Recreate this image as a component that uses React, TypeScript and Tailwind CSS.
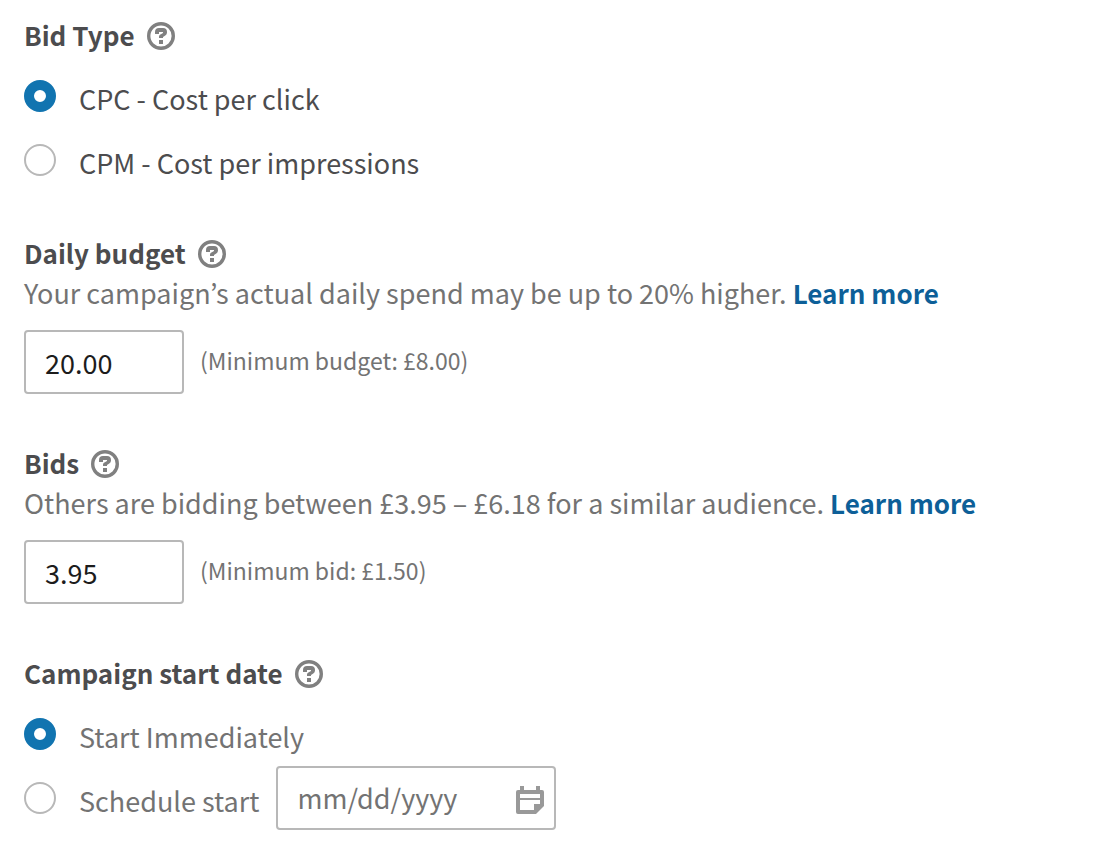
import { useState } from "react";
import type { ReactNode } from "react";

function HelpIcon() {
  return (
    <svg viewBox="0 0 28 28" className="h-7 w-7" fill="currentColor" aria-hidden="true">
      <circle cx="14" cy="14" r="12.3" fill="none" stroke="currentColor" strokeWidth="3.4" />
      <path d="M8 12v-2a4 4 0 0 1 4-4h4a4 4 0 0 1 4 4v.5a3.500 3.500 0 0 1-1.700 3L16 14.900V16h-4v-1.500a2 2 0 0 1 1-1.700l2.600-1.500a.8.8 0 0 0 .4-.7V10h-4v2z" />
      <path d="M12 18h4v4h-4z" />
    </svg>
  );
}

function CalendarIcon() {
  return (
    <svg viewBox="0 0 28 28" className="h-7 w-7 shrink-0" fill="currentColor" aria-hidden="true">
      <path
        fillRule="evenodd"
        d="M4 0h4v4h12V0h4v4h2a2 2 0 0 1 2 2v14l-8 8H2a2 2 0 0 1-2-2V6a2 2 0 0 1 2-2h2zM4 8v4h20V8zM4 14v10h14v-6h6v-4z"
      />
    </svg>
  );
}

function FieldTitle({ children }: { children: ReactNode }) {
  return (
    <div className="flex h-10 items-center gap-3">
      <h2 className="pb-1 font-bold text-[#4c4c4e]">{children}</h2>
      <button type="button" aria-label="Help" className="text-[#808080]">
        <HelpIcon />
      </button>
    </div>
  );
}

interface RadioOptionProps {
  name: string;
  label: string;
  checked: boolean;
  onSelect: () => void;
  muted?: boolean;
}

function RadioOption({ name, label, checked, onSelect, muted = false }: RadioOptionProps) {
  return (
    <label className={`flex h-16 items-start gap-[23px] text-[27px] ${muted ? "text-[#737373]" : "text-[#4c4c4e]"}`}>
      <input
        type="radio"
        name={name}
        checked={checked}
        onChange={onSelect}
        className="mt-6 h-8 w-8 shrink-0 appearance-none rounded-full border-2 border-[#b8b8b8] bg-white checked:border-10 checked:border-[#1174b0]"
      />
      <span className="pt-6 leading-[38px]">{label}</span>
    </label>
  );
}

interface AmountFieldProps {
  title: string;
  help: string;
  minimum: string;
  initial: string;
}

function AmountField({ title, help, minimum, initial }: AmountFieldProps) {
  const [value, setValue] = useState(initial);

  return (
    <section className="mb-[50px]">
      <FieldTitle>{title}</FieldTitle>
      <p className="text-[27px] leading-[38px] text-[#737373]">
        {help}{" "}
        <a href="#" className="text-[26px] font-bold text-[#0d5f98]">
          Learn more
        </a>
      </p>
      <div className="mt-[18px] flex items-center gap-4">
        <input
          type="text"
          aria-label={title}
          value={value}
          onChange={(e) => setValue(e.target.value)}
          className="h-16 w-40 rounded-sm border-2 border-[#b8b8b8] px-[19px] text-[27px] text-[#1c1c1c]"
        />
        <span className="pb-1 text-[23px] text-[#737373]">{minimum}</span>
      </div>
    </section>
  );
}

export default function App() {
  const [bidType, setBidType] = useState("cpc");
  const [start, setStart] = useState("now");
  const [date, setDate] = useState("");

  return (
    <main className="bg-white px-6 py-4 font-['Noto_Sans_CJK_KR',sans-serif] text-[26px]">
      {/* Bid type */}
      <section className="mb-[50px]">
        <FieldTitle>Bid Type</FieldTitle>
        <RadioOption name="bid-type" label="CPC - Cost per click" checked={bidType === "cpc"} onSelect={() => setBidType("cpc")} />
        <RadioOption name="bid-type" label="CPM - Cost per impressions" checked={bidType === "cpm"} onSelect={() => setBidType("cpm")} />
      </section>

      <AmountField
        title="Daily budget"
        help="Your campaign’s actual daily spend may be up to 20% higher."
        minimum="(Minimum budget: £8.00)"
        initial="20.00"
      />
      <AmountField
        title="Bids"
        help="Others are bidding between £3.95 – £6.18 for a similar audience."
        minimum="(Minimum bid: £1.50)"
        initial="3.95"
      />

      {/* Start date */}
      <section>
        <FieldTitle>Campaign start date</FieldTitle>
        <RadioOption name="start" label="Start Immediately" checked={start === "now"} onSelect={() => setStart("now")} muted />
        <div className="flex items-start gap-[17px]">
          <RadioOption name="start" label="Schedule start" checked={start === "later"} onSelect={() => setStart("later")} muted />
          <div className="mt-2 flex h-16 w-70 items-center rounded-sm border-2 border-[#b8b8b8] pt-1 pr-2.5 pl-[19px] text-[#999999]">
            <input
              type="text"
              aria-label="Start date"
              placeholder="mm/dd/yyyy"
              value={date}
              onChange={(e) => setDate(e.target.value)}
              className="min-w-0 flex-1 pb-1 text-[27px] text-[#737373] outline-none placeholder:text-[#737373]"
            />
            <CalendarIcon />
          </div>
        </div>
      </section>
    </main>
  );
}
